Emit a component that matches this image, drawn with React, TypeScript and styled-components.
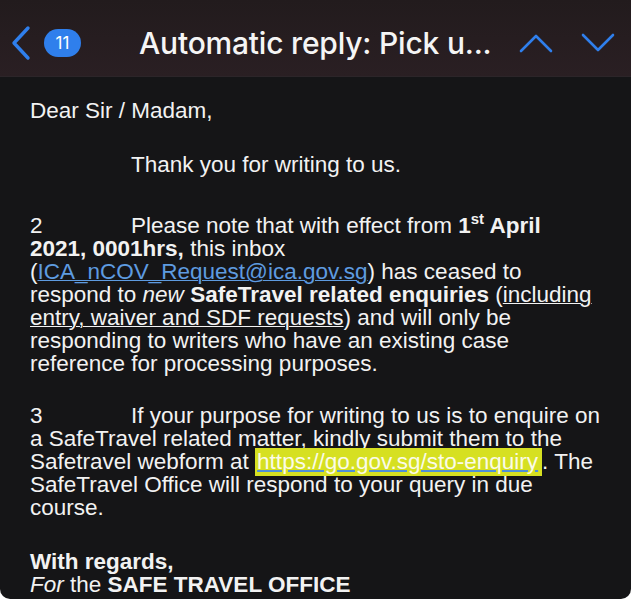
import React from 'react';
import styled, { createGlobalStyle } from 'styled-components';

const GlobalStyle = createGlobalStyle`
    html, body {
        margin: 0;
        padding: 0;
        background: #ffffff;
    }
`;

const Screen = styled.div`
    width: 631px;
    height: 599px;
    overflow: hidden;
    background: #151517;
    border-radius: 0 0 10px 10px;
    display: flex;
    flex-direction: column;
`;

const Header = styled.div`
    height: 77px;
    flex-shrink: 0;
    background: linear-gradient(180deg, #221b1d 0%, #2a1f23 100%);
    border-bottom: 1px solid #2c2529;
    display: flex;
    align-items: center;
    padding: 9px 16px 0 10px;
    box-sizing: border-box;
`;

const IconButton = styled.div`
    display: flex;
    align-items: center;
    justify-content: center;
    color: #2f7fec;
`;

const Badge = styled.div`
    background: #2f7fec;
    color: #ffffff;
    font-family: "Inter", "Liberation Sans", sans-serif;
    font-size: 17px;
    border-radius: 14px;
    height: 28px;
    min-width: 37px;
    display: flex;
    align-items: center;
    justify-content: center;
    margin-left: 12px;
`;

const Title = styled.div`
    flex: 1;
    color: #f5f5f5;
    font-family: "Inter", "Liberation Sans", sans-serif;
    font-weight: 500;
    font-size: 30px;
    letter-spacing: -0.2px;
    padding-left: 58px;
    white-space: nowrap;
`;

const Arrows = styled.div`
    display: flex;
    align-items: center;
    gap: 28px;
`;

const Body = styled.div`
    padding: 22px 24px 0 30px;
    color: #f2f2f2;
    font-family: "Liberation Sans", Arial, sans-serif;
    font-size: 22.5px;
    line-height: 23px;
`;

const Para = styled.p<{ $gap?: number }>`
    margin: 0 0 ${p => p.$gap ?? 31}px 0;
`;

const Num = styled.span<{ $width?: number }>`
    display: inline-block;
    width: ${p => p.$width ?? 101}px;
`;

const Sup = styled.sup`
    font-size: 15px;
    line-height: 0;
    vertical-align: 9px;
`;

const MailLink = styled.span`
    color: #5e9be0;
    text-decoration: underline;
    text-decoration-thickness: 1px;
`;

const Under = styled.span`
    text-decoration: underline;
    text-decoration-thickness: 1px;
`;

const Highlight = styled.span`
    background: #d6e021;
    color: #fbfbe8;
    text-decoration: underline;
    text-decoration-color: #4f8fd8;
    text-decoration-thickness: 2px;
    padding: 1px 4px 2px 2px;
`;

const ChevronLeft = () => (
    <svg width="22" height="36" viewBox="0 0 22 36" fill="none">
        <path d="M18 3 L4 18 L18 33" stroke="currentColor" strokeWidth="3.4" strokeLinecap="round" strokeLinejoin="round" />
    </svg>
);

const Chevron = ({ up }: { up?: boolean }) => (
    <svg width="34" height="20" viewBox="0 0 34 20" fill="none">
        <path
            d={up ? 'M2 18 L17 3 L32 18' : 'M2 2 L17 17 L32 2'}
            stroke="currentColor"
            strokeWidth="2.6"
            strokeLinecap="round"
            strokeLinejoin="round"
        />
    </svg>
);

export default function App() {
    return (
        <>
            <GlobalStyle />
            <Screen>
                <Header>
                    <IconButton><ChevronLeft /></IconButton>
                    <Badge>11</Badge>
                    <Title>Automatic reply: Pick u...</Title>
                    <Arrows>
                        <IconButton><Chevron up /></IconButton>
                        <IconButton><Chevron /></IconButton>
                    </Arrows>
                </Header>
                <Body>
                    <Para>Dear Sir / Madam,</Para>
                    <Para $gap={38}><Num />Thank you for writing to us.</Para>
                    <Para $gap={29}>
                        <Num>2</Num>Please note that with effect from <b>1<Sup>st</Sup> April<br />2021, 0001hrs,</b> this inbox
                        (<MailLink>ICA_nCOV_Request@ica.gov.sg</MailLink>) has ceased to respond to <i>new</i>{' '}
                        <b>SafeTravel related enquiries</b> (<Under>including entry, waiver and SDF requests</Under>) and
                        will only be responding to writers who have an existing case reference for processing purposes.
                    </Para>
                    <Para>
                        <Num>3</Num>If your purpose for writing to us is to enquire on a SafeTravel related matter, kindly
                        submit them to the Safetravel webform at <Highlight>https://go.gov.sg/sto-enquiry</Highlight>. The
                        SafeTravel Office will respond to your query in due course.
                    </Para>
                    <Para $gap={0}>
                        <b>With regards,</b>
                        <br />
                        <i>For</i> the <b>SAFE TRAVEL OFFICE</b>
                    </Para>
                </Body>
            </Screen>
        </>
    );
}
